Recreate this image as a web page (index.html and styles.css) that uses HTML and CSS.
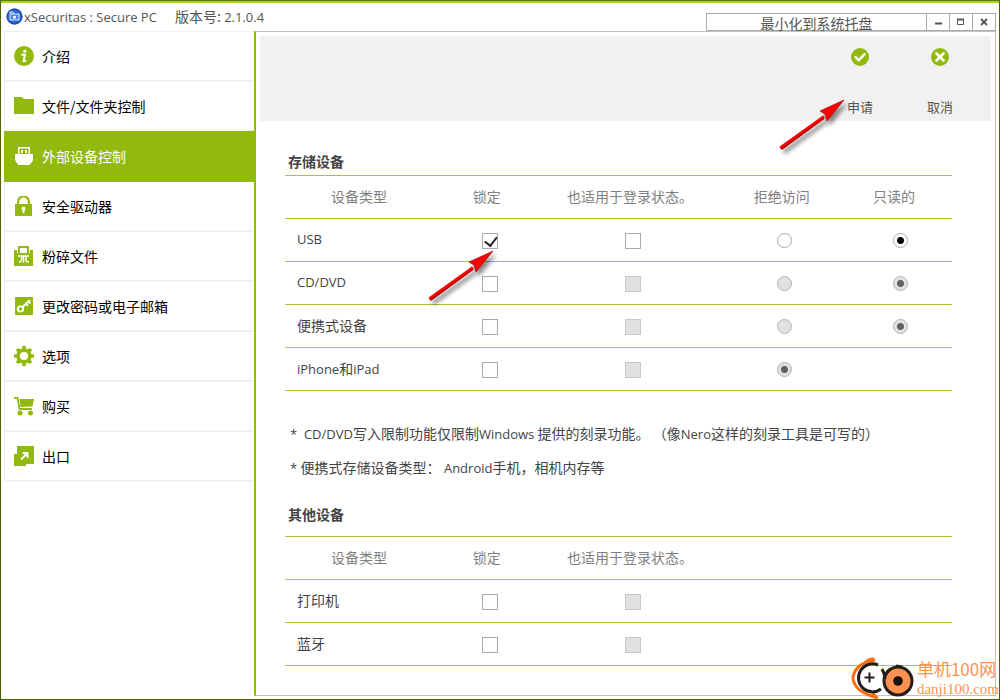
FILE: index.html
```html
<!DOCTYPE html>
<html lang="zh-CN">
<head>
<meta charset="utf-8">
<meta name="viewport" content="width=device-width, initial-scale=1">
<title>xSecuritas : Secure PC</title>
<link rel="stylesheet" href="styles.css">
</head>
<body>
<div class="window">
  <header class="titlebar">
    <svg class="app-icon" viewBox="0 0 17 17" aria-hidden="true">
      <circle cx="8.500" cy="8.500" r="8" fill="#2a62cc"/>
      <circle cx="8.500" cy="8.500" r="7.500" fill="none" stroke="#1c4aa5"/>
      <path d="M4 5.500V4h3l1 1.500M4 6h9v6H4z" fill="#4d84dd" stroke="#e4eefc"/>
      <path d="M7 8h3v2.500H7z" fill="#e4eefc"/>
    </svg>
    <h1 class="title">xSecuritas : Secure PC</h1>
    <span class="version"><span class="cjk">版本号:</span> 2.1.0.4</span>
    <div class="window-buttons">
      <button class="tray-button" type="button">最小化到系统托盘</button>
      <button class="win-button" type="button" aria-label="最小化"><svg viewBox="0 0 12 12"><path d="M3 7.500h7" stroke="#555" stroke-width="2"/></svg></button>
      <button class="win-button" type="button" aria-label="最大化"><svg viewBox="0 0 12 12"><path d="M2.500 3.500h6v5h-6z" fill="none" stroke="#555"/><path d="M2 3.500h7" stroke="#555" stroke-width="2"/></svg></button>
      <button class="win-button" type="button" aria-label="关闭"><svg viewBox="0 0 12 12"><path d="M3 3l6 6M9 3L3 9" stroke="#555" stroke-width="1.800"/></svg></button>
    </div>
  </header>

  <div class="body">
    <nav class="sidebar">
      <button class="nav-item" type="button"><svg viewBox="0 0 20 20"><circle cx="10" cy="10" r="10"/><circle cx="10.800" cy="5.200" r="1.600" fill="#fff"/><path d="M7.300 8.800h3.700L9.600 15h2.600" fill="none" stroke="#fff" stroke-width="2"/></svg>介绍</button>
      <button class="nav-item" type="button"><svg viewBox="0 0 20 20"><path d="M0 1h8l2 2h10v15H0z"/></svg>文件/文件夹控制</button>
      <button class="nav-item active" type="button" aria-current="page"><svg viewBox="0 0 20 20"><path fill-rule="evenodd" d="M4 1h12v7h3v5q0 2-1.500 3.500T15 19H5q-1 0-2.500-2.500T1 13V8h3zm1.500 1.500V8h9V2.500zM7 4h2v3H7zm4 0h2v3h-2z"/></svg>外部设备控制</button>
      <button class="nav-item" type="button"><svg viewBox="0 0 20 20"><path d="M4 9V6a5.500 5.500 0 0 1 11 0v3" fill="none" stroke="#91b90e" stroke-width="2.200"/><path d="M1 8h17v12H1z"/><circle cx="9.500" cy="12.500" r="2" fill="#fff"/><path d="M9.500 13v4" stroke="#fff" stroke-width="2"/></svg>安全驱动器</button>
      <button class="nav-item" type="button"><svg viewBox="0 0 20 20"><path d="M0 4h3v3h13V4h3v16H0z"/><path d="M5 7V1h9v6" fill="none" stroke="#91b90e" stroke-width="2"/><path d="M4 10h11M7.500 10v4q0 2-2.500 2M9.500 10v7M12 10v4q0 2 3 2" fill="none" stroke="#fff" stroke-width="1.500"/></svg>粉碎文件</button>
      <button class="nav-item" type="button"><svg viewBox="0 0 20 20"><path d="M1 1h18v18H1z"/><circle cx="6.500" cy="13" r="2.700" fill="none" stroke="#fff" stroke-width="1.800"/><path d="M8.500 11l7.500-7M12 7.500l2 2.500M14.500 5.500l2 2" fill="none" stroke="#fff" stroke-width="1.800"/></svg>更改密码或电子邮箱</button>
      <button class="nav-item" type="button"><svg viewBox="0 0 20 20"><circle cx="10" cy="10" r="5.900" fill="none" stroke="#91b90e" stroke-width="3.600"/><path d="M10 0v4M10 16v4M0 10h4M16 10h4M3 3l3 3M14 14l3 3M3 17l3-3M14 6l3-3" stroke="#91b90e" stroke-width="3.600"/></svg>选项</button>
      <button class="nav-item" type="button"><svg viewBox="0 0 20 20"><path d="M0 2h3.500l2 11H18" fill="none" stroke="#91b90e" stroke-width="1.800"/><path d="M5.500 3H20l-1.500 7.500-12 .5z"/><circle cx="6" cy="17" r="2.500"/><circle cx="16.500" cy="17" r="2.500"/></svg>购买</button>
      <button class="nav-item" type="button"><svg viewBox="0 0 20 20"><path d="M3 0h17v18h-8v2H0V8h3z"/><path d="M7 13.500l6-6M8.500 7H13.500v5" fill="none" stroke="#fff" stroke-width="2"/></svg>出口</button>
    </nav>

    <main class="panel">
      <div class="toolbar">
        <button class="tool" type="button"><svg viewBox="0 0 18 18"><circle cx="9" cy="9" r="9" fill="#91b90e"/><path d="M4.500 9l3.200 3.300 6-6.300" fill="none" stroke="#fff" stroke-width="2.400" stroke-linecap="round"/></svg>申请</button>
        <button class="tool" type="button"><svg viewBox="0 0 18 18"><circle cx="9" cy="9" r="9" fill="#91b90e"/><path d="M5.500 5.500l7 7M12.500 5.500l-7 7" fill="none" stroke="#fff" stroke-width="2.600" stroke-linecap="round"/></svg>取消</button>
      </div>

      <div class="content">
        <h2 class="section-title">存储设备</h2>
        <table class="devices">
          <colgroup><col class="c-name"><col class="c-lock"><col class="c-login"><col class="c-deny"><col class="c-read"></colgroup>
          <thead><tr><th>设备类型</th><th>锁定</th><th>也适用于登录状态。</th><th>拒绝访问</th><th>只读的</th></tr></thead>
          <tbody>
            <tr><td><label for="usb">USB</label></td><td><input id="usb" type="checkbox" checked></td><td><input type="checkbox" aria-label="USB 登录状态"></td><td><input type="radio" name="usb" aria-label="USB 拒绝访问"></td><td><input type="radio" name="usb" checked aria-label="USB 只读的"></td></tr>
            <tr><td><label for="cd">CD/DVD</label></td><td><input id="cd" type="checkbox"></td><td><input type="checkbox" disabled aria-label="CD/DVD 登录状态"></td><td><input type="radio" name="cd" disabled aria-label="CD/DVD 拒绝访问"></td><td><input type="radio" name="cd" checked disabled aria-label="CD/DVD 只读的"></td></tr>
            <tr><td><label for="portable" class="cjk">便携式设备</label></td><td><input id="portable" type="checkbox"></td><td><input type="checkbox" disabled aria-label="便携式设备 登录状态"></td><td><input type="radio" name="portable" disabled aria-label="便携式设备 拒绝访问"></td><td><input type="radio" name="portable" checked disabled aria-label="便携式设备 只读的"></td></tr>
            <tr><td><label for="iphone">iPhone<span class="cjk">和</span>iPad</label></td><td><input id="iphone" type="checkbox"></td><td><input type="checkbox" disabled aria-label="iPhone和iPad 登录状态"></td><td><input type="radio" name="iphone" checked disabled aria-label="iPhone和iPad 拒绝访问"></td><td></td></tr>
          </tbody>
        </table>

        <div class="notes">
          <p>*&nbsp; CD/DVD<span class="cjk">写入限制功能仅限制</span>Windows <span class="cjk">提供的刻录功能。 （像</span>Nero<span class="cjk">这样的刻录工具是可写的）</span></p>
          <p>* <span class="cjk">便携式存储设备类型：</span> Android<span class="cjk">手机，相机内存等</span></p>
        </div>

        <h2 class="section-title section-title-spaced">其他设备</h2>
        <table class="devices">
          <colgroup><col class="c-name"><col class="c-lock"><col class="c-login"><col class="c-deny"><col class="c-read"></colgroup>
          <thead><tr><th>设备类型</th><th>锁定</th><th>也适用于登录状态。</th><th></th><th></th></tr></thead>
          <tbody>
            <tr><td><label for="printer" class="cjk">打印机</label></td><td><input id="printer" type="checkbox"></td><td><input type="checkbox" disabled aria-label="打印机 登录状态"></td><td></td><td></td></tr>
            <tr><td><label for="bluetooth" class="cjk">蓝牙</label></td><td><input id="bluetooth" type="checkbox"></td><td><input type="checkbox" disabled aria-label="蓝牙 登录状态"></td><td></td><td></td></tr>
          </tbody>
        </table>
      </div>
    </main>
  </div>

  <svg class="arrow arrow-apply" viewBox="0 0 80 64" aria-hidden="true"><path d="M8 53L49 23" stroke="#a00" stroke-width="3" stroke-linecap="round"/><path d="M7 52L49 22" stroke="#f00" stroke-width="2.500" stroke-linecap="round"/><path d="M70 5L46 16l5 3 2 7z" fill="#f00" stroke="#911" stroke-width=".7"/></svg>
  <svg class="arrow arrow-usb" viewBox="0 0 80 64" aria-hidden="true"><path d="M8 53L49 23" stroke="#a00" stroke-width="3" stroke-linecap="round"/><path d="M7 52L49 22" stroke="#f00" stroke-width="2.500" stroke-linecap="round"/><path d="M70 5L46 16l5 3 2 7z" fill="#f00" stroke="#911" stroke-width=".7"/></svg>

  <div class="watermark">
    <svg viewBox="-2 0 66 44" aria-hidden="true">
      <path d="M22 4Q2 7 0 22q1 14 25 20" fill="none" stroke="#ff6d12" stroke-width="3"/>
      <path d="M11 6q5-5 10-4l-1 4M15 38q5 3 9 3l-3-4" fill="#ff6d12" stroke="#ff6d12"/>
      <circle cx="45" cy="25" r="14" fill="#ff9150" stroke="#241d1c" stroke-width="3"/>
      <circle cx="45" cy="25" r="4.800" fill="#16110f"/>
      <path d="M25 9a14 14 0 1 0 3 24" fill="none" stroke="#241d1c" stroke-width="3"/>
      <path d="M29 13q3 5 3 10M38 13q-5 3-7 9M43 10l6 1" fill="none" stroke="#241d1c" stroke-width="3"/>
      <path d="M11.500 21.500h10M16.500 16.500v10" stroke="#241d1c" stroke-width="2"/>
    </svg>
    <div class="watermark-text"><span class="watermark-name">单机100网</span><span class="watermark-url">danji100.com</span></div>
  </div>
</div>
</body>
</html>
```
FILE: styles.css
```css
* { box-sizing: border-box; }

body {
  margin: 0;
  font: 13px/20px "Open Sans", "Noto Sans CJK SC", sans-serif;
  color: #444;
  background: #fff;
}

button {
  margin: 0;
  padding: 0;
  border: 0;
  background: none;
  font: 14px/20px "Noto Sans CJK SC", sans-serif;
  color: inherit;
}

.cjk { font: 14px/20px "Noto Sans CJK SC", sans-serif; }

.window {
  position: relative;
  display: flex;
  flex-direction: column;
  min-height: 100vh;
  padding: 0 3px 3px;
  border: 1px solid #4f6200;
  border-top-color: #5f7a00;
  box-shadow: inset 0 2px #a9d40a;
}

.titlebar {
  display: flex;
  align-items: center;
  height: 30px;
  padding-left: 2px;
  color: #555;
}
.app-icon { width: 17px; height: 17px; }
.title { margin: 2px 0 0 1px; font-size: 13px; font-weight: 400; }
.version { margin: 1px 0 0 18px; }
.window-buttons { display: flex; align-self: flex-end; height: 18px; margin-left: auto; }
.tray-button {
  width: 221px;
  border: 1px solid #aaa;
  line-height: 18px;
}
.win-button {
  display: flex;
  align-items: center;
  justify-content: center;
  width: 24px;
  margin-left: -1px;
  border: 1px solid #aaa;
}
.win-button svg { width: 12px; height: 12px; }

.body { display: flex; flex: 1; }

.sidebar { width: 250px; border-top: 1px solid #f0f0f0; }
.nav-item {
  display: flex;
  align-items: center;
  gap: 8px;
  width: 100%;
  height: 50px;
  padding-left: 9px;
  border-left: 1px solid #f0f0f0;
  border-bottom: 2px solid #f1f1f1;
  color: #000;
}
.nav-item svg { width: 20px; height: 20px; fill: #91b90e; }
.nav-item.active { background: #91b90e; border-color: #91b90e; box-shadow: 0 -1px #91b90e; color: #fff; }
.nav-item.active svg { fill: #fff; }

.panel {
  flex: 1;
  padding: 4px;
  border: 1px solid #c2c4b8;
  border-left: 2px solid #91b90e;
}
.toolbar {
  display: flex;
  justify-content: flex-end;
  gap: 40px;
  height: 85px;
  padding: 12px 31px 0 0;
  background: #f1f1f1;
}
.tool {
  display: flex;
  flex-direction: column;
  align-items: center;
  gap: 31px;
  width: 40px;
  height: 69px;
  font-size: 13px;
  color: #555;
}
.tool svg { flex: none; width: 18px; height: 18px; }

.content { padding: 30px 39px 0 25px; }
.section-title { margin: 0; padding: 0 3px 4px; font: 700 14px/20px "Noto Sans CJK SC", sans-serif; }
.section-title-spaced { padding-bottom: 12px; }

.devices { width: 100%; table-layout: fixed; border-collapse: collapse; border-top: 1px solid #a6c73d; }
.devices tr { height: 43px; border-bottom: 1px solid #a6c73d; }
.devices th {
  padding: 0 6px 2px 0;
  font: 14px/20px "Noto Sans CJK SC", sans-serif;
  color: #808080;
}
.devices th:first-child { padding-right: 0; }
.devices th:last-child { padding-right: 14px; }
.devices td { padding: 0; text-align: center; }
.devices td:first-child { padding: 0 0 2px 12px; text-align: left; }
.c-name { width: 148px; }
.c-lock { width: 17%; }
.c-login { width: 26%; }
.c-deny { width: 130px; }

input {
  appearance: none;
  display: block;
  width: 16px;
  height: 16px;
  margin: 1px auto 0;
  border: 1px solid #aaa;
  background: #fff;
}
input[type="radio"] { width: 15px; height: 15px; border-radius: 50%; }
input:disabled { border-color: #c8c8c8; background: #e1e1e1; }
input[type="radio"]:disabled { border-color: #b4b4b4; }
input[type="radio"]:checked { background: radial-gradient(circle, #000 3px, #fff 4px); }
input[type="radio"]:checked:disabled { background: radial-gradient(circle, #606060 3px, #e1e1e1 4px); }
input[type="checkbox"]:checked::before {
  content: "";
  display: block;
  width: 6px;
  height: 10px;
  margin: 1px 0 0 4px;
  border: solid #222;
  border-width: 0 2px 2px 0;
  transform: translate(0, -1px) rotate(38deg);
}
input[type="checkbox"]:checked { overflow: hidden; }

.notes { display: flex; flex-direction: column; gap: 14px; padding: 32px 0 27px 5px; }
.notes p { height: 20px; margin: 0; }

.arrow { position: absolute; width: 80px; height: 64px; fill: none; pointer-events: none; filter: drop-shadow(3px 4px 2px #0007); }
.arrow-apply { left: 773px; top: 94px; }
.arrow-usb { left: 422px; top: 245px; }

.watermark { position: absolute; right: 0; bottom: -1px; display: flex; color: #ff9150; }
.watermark svg { width: 66px; height: 44px; }
.watermark-text { display: flex; flex-direction: column; padding-top: 2px; }
.watermark-name { font: 17px/22px "Noto Sans CJK SC", sans-serif; }
.watermark-url { font: 15px/18px "Liberation Serif", serif; }
```
